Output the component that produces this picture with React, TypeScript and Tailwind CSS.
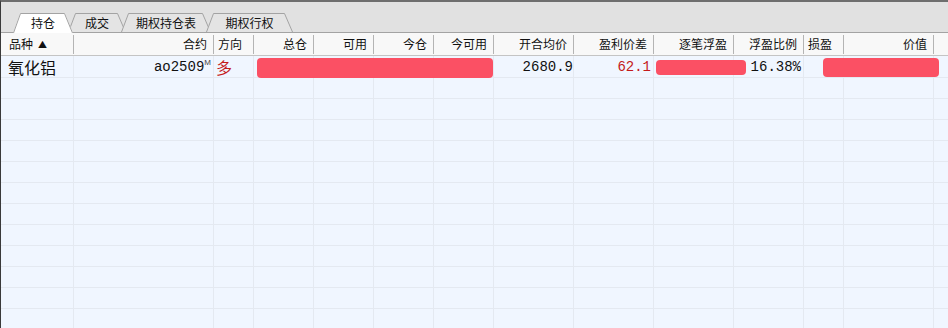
const cols = [
    { label: "品种", w: 73, align: "left" },
    { label: "合约", w: 140, align: "right" },
    { label: "方向", w: 40, align: "left" },
    { label: "总仓", w: 60, align: "right" },
    { label: "可用", w: 60, align: "right" },
    { label: "今仓", w: 60, align: "right" },
    { label: "今可用", w: 60, align: "right" },
    { label: "开合均价", w: 80, align: "right" },
    { label: "盈利价差", w: 80, align: "right" },
    { label: "逐笔浮盈", w: 80, align: "right" },
    { label: "浮盈比例", w: 70, align: "right" },
    { label: "损盈", w: 40, align: "left" },
    { label: "价值", w: 90, align: "right" },
];

const tabs = [
    { label: "持仓", w: 60, ml: 12, active: true },
    { label: "成交", w: 58, ml: -5, active: false },
    { label: "期权持仓表", w: 90, ml: -5, active: false },
    { label: "期权行权", w: 87, ml: -5, active: false },
];

const cjk = "font-['Noto_Sans_CJK_SC',sans-serif]";
const mono = "font-['Liberation_Mono','Noto_Sans_CJK_SC',monospace]";

function Tab({ label, w, ml, active }: { label: string; w: number; ml: number; active: boolean }) {
    const h = active ? 20 : 19;
    return (
        <div
            className={`relative flex items-center justify-center ${active ? "z-10 mb-[-1px]" : ""}`}
            style={{ width: w, height: h, marginLeft: ml }}
        >
            <svg className="absolute inset-0" width={w} height={h} viewBox={`0 0 ${w} ${h}`}>
                <polygon
                    points={`0,${h} 7,0.5 ${w - 8},0.5 ${w},${h}`}
                    fill={active ? "#ffffff" : "#e4e4e4"}
                />
                <polyline
                    points={`0.5,${h} 7.5,0.5 ${w - 8.5},0.5 ${w - 0.5},${h}`}
                    fill="none"
                    stroke="#a3a3a3"
                    strokeWidth="1"
                />
            </svg>
            <span className={`relative text-[12px] leading-none text-[#111] ${cjk} ${active ? "mb-[1px]" : ""}`}>
                {label}
            </span>
        </div>
    );
}

function Block({ w, top, h }: { w: number; top: number; h: number }) {
    return <div className="rounded-[4px] bg-[#fb5064]" style={{ width: w, height: h, marginTop: top }} />;
}

function GridCells() {
    return (
        <>
            {cols.map((c, i) => (
                <div key={i} className="h-full shrink-0 border-r border-[#e4e9f1]" style={{ width: c.w }} />
            ))}
        </>
    );
}

function EmptyRow() {
    return (
        <div className="flex h-[21px] shrink-0 border-b border-[#e4e9f1]">
            <GridCells />
        </div>
    );
}

export default function App() {
    return (
        <div className="w-[948px] h-[328px] overflow-hidden bg-[#f0f6ff] border-t-2 border-[#6e6e6e] border-l border-l-[#3a3a3a] flex flex-col">
            {/* Tab strip */}
            <div className="h-[31px] shrink-0 bg-[#e1e1e1] border-b border-[#a3a3a3] flex items-end">
                {tabs.map((t) => (
                    <Tab key={t.label} {...t} />
                ))}
            </div>

            {/* Header */}
            <div className={`flex h-[23px] shrink-0 bg-[#f8f8f8] border-b border-[#c4c4c4] ${cjk} text-[12px] text-[#111]`}>
                {cols.map((c, i) => (
                    <div key={i} className="flex items-center shrink-0" style={{ width: c.w }}>
                        <div
                            className={`flex-1 whitespace-nowrap ${
                                c.align === "right" ? "text-right pr-[6px]" : i === 0 ? "pl-[8px]" : "pl-[4px]"
                            }`}
                        >
                            {c.label}
                            {i === 0 && <span className="ml-[5px] text-[9px] align-[1px]">▲</span>}
                        </div>
                        <div className="w-px h-[19px] bg-[#b4b4b4]" />
                    </div>
                ))}
            </div>

            {/* Data row */}
            <div className="relative flex h-[22px] shrink-0 border-b border-[#e4e9f1]">
                <GridCells />
                <div className="absolute inset-0 flex items-start text-[#111]">
                    <div className={`w-[73px] shrink-0 pl-[7px] pt-[1px] text-[16px] leading-[20px] ${cjk}`}>氧化铝</div>
                    <div className={`w-[140px] shrink-0 flex justify-end pr-[3px] pt-[2px] text-[14px] leading-[18px] ${mono}`}>
                        ao2509<span className="text-[8px] leading-[10px] text-[#444] font-['Liberation_Sans',sans-serif]">M</span>
                    </div>
                    <div className={`w-[40px] shrink-0 pl-[2px] pt-[1px] text-[16px] leading-[20px] text-[#c41a1a] ${cjk}`}>多</div>
                    <div className="w-[240px] shrink-0 pl-[3px]">
                        <Block w={236} top={2} h={20} />
                    </div>
                    <div className={`w-[80px] shrink-0 text-right pr-[1px] pt-[2px] text-[14px] leading-[18px] ${mono}`}>2680.9</div>
                    <div className={`w-[80px] shrink-0 text-right pr-[3px] pt-[2px] text-[14px] leading-[18px] text-[#c41a1a] ${mono}`}>62.1</div>
                    <div className="w-[80px] shrink-0 pl-[2px]">
                        <Block w={90} top={4} h={15} />
                    </div>
                    <div className={`w-[70px] shrink-0 text-right pr-[3px] pt-[2px] text-[14px] leading-[18px] ${mono}`}>16.38%</div>
                    <div className="shrink-0 pl-[19px]">
                        <Block w={116} top={2} h={19} />
                    </div>
                </div>
            </div>

            {Array.from({ length: 12 }).map((_, i) => (
                <EmptyRow key={i} />
            ))}
        </div>
    );
}
